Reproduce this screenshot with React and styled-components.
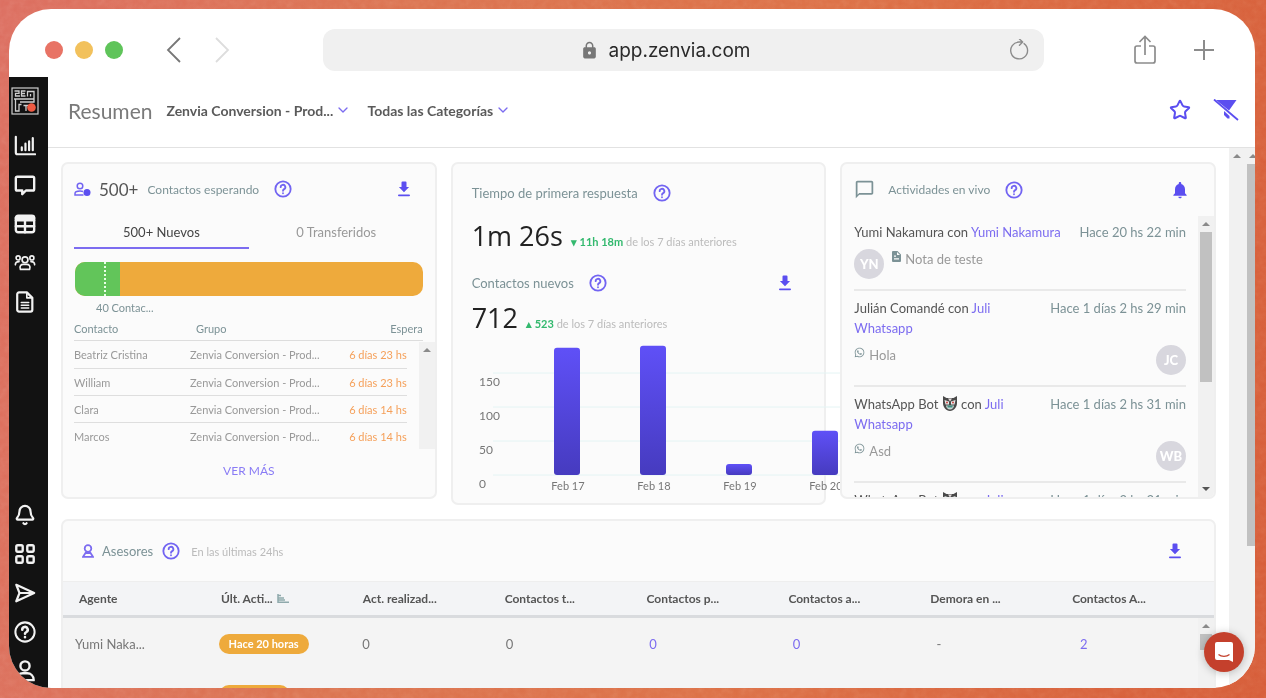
import React, { useState } from 'react';
import styled, { createGlobalStyle } from 'styled-components';
import { MdNotifications, MdChatBubbleOutline, MdLock } from 'react-icons/md';
import { FaWhatsapp } from 'react-icons/fa';
import { Star, Bell, ChevronDown } from 'lucide-react';

const GlobalStyle = createGlobalStyle`
  * {
    box-sizing: border-box;
  }

  body {
    margin: 0;
    font-family: Lato, 'Open Sans', sans-serif;
    font-size: 13px;
    color: #444;
  }

  button, input, select {
    font: inherit;
    color: inherit;
  }

  a {
    color: #7c6cf0;
    text-decoration: none;
  }

  svg {
    display: block;
    flex-shrink: 0;
  }
`;

const Backdrop = styled.div`
  position: relative;
  display: flex;
  height: 100vh;
  padding: 9px 11px 10px 9px;
  background: linear-gradient(100deg, #dc6e60 0%, #db7350 30%, #dc7046 60%, #d65c38 100%);
`;

const Grain = styled.svg`
  position: absolute;
  inset: 0;
  width: 100%;
  height: 100%;
  opacity: 0.4;
  mix-blend-mode: soft-light;
`;

const BrowserWindow = styled.div`
  position: relative;
  flex: 1;
  min-width: 0;
  display: flex;
  flex-direction: column;
  overflow: hidden;
  border-radius: 42px;
  background: #fff;
`;

const Chrome = styled.header`
  display: flex;
  align-items: center;
  flex-shrink: 0;
  height: 68px;
  padding: 14px 40px 0 36px;
  color: #8c8c8c;
`;

const Lights = styled.div`
  display: flex;
  gap: 12px;
`;

const Light = styled.span`
  width: 18px;
  height: 18px;
  border-radius: 50%;
  background: ${({ $color }) => $color};
`;

const ChromeNav = styled.div`
  display: flex;
  gap: 28px;
  margin: 0 91px 0 41px;
`;

const IconButton = styled.button`
  display: flex;
  padding: 0;
  border: none;
  background: none;
  color: ${({ $color }) => $color || '#5b4ef0'};
  cursor: pointer;
`;

const AddressBar = styled.div`
  flex: 1;
  display: flex;
  align-items: center;
  justify-content: center;
  gap: 10px;
  height: 42px;
  padding: 0 14px;
  border-radius: 12px;
  background: #f0f0f0;
`;

const AddressInput = styled.input`
  width: 150px;
  padding: 0;
  border: none;
  outline: none;
  background: none;
  font-family: Inter, 'Open Sans', sans-serif;
  font-size: 19px;
  color: #2a2a2a;
`;

const AddressSide = styled.div`
  flex: 1;
  display: flex;
  justify-content: flex-end;
`;

const ChromeActions = styled.div`
  display: flex;
  align-items: center;
  gap: 36px;
  margin-left: 89px;
`;

const AppBody = styled.div`
  flex: 1;
  min-height: 0;
  display: flex;
`;

const Sidebar = styled.nav`
  display: flex;
  flex-direction: column;
  align-items: center;
  justify-content: space-between;
  flex-shrink: 0;
  width: 39px;
  padding: 10px 7px 6px 0;
  background: #121212;
  color: #f2f2f2;
`;

const SidebarGroup = styled.div`
  display: flex;
  flex-direction: column;
  align-items: center;
  gap: 17px;
`;

const LogoLink = styled.a`
  margin-bottom: 3px;
`;

const Main = styled.main`
  flex: 1;
  min-width: 0;
  display: flex;
  flex-direction: column;
`;

const TopBar = styled.div`
  display: flex;
  align-items: center;
  flex-shrink: 0;
  height: 71px;
  padding: 0 16px 4px 20px;
  border-bottom: 1px solid #e2e2e2;
`;

const PageTitle = styled.h1`
  margin: 0 14px 0 0;
  font-size: 21px;
  font-weight: 400;
  color: #7a7a7a;
`;

const Picker = styled.label`
  display: flex;
  align-items: center;
  margin-right: 16px;
  color: #7c6cf0;

  svg {
    margin-left: -14px;
    pointer-events: none;
  }
`;

const PickerSelect = styled.select`
  appearance: none;
  padding: 0 16px 0 0;
  border: none;
  background: none;
  font-size: 14px;
  font-weight: 700;
  color: #5a5a5a;
`;

const TopActions = styled.div`
  display: flex;
  align-items: center;
  gap: 22px;
  margin-left: auto;
`;

const ScrollRow = styled.div`
  flex: 1;
  min-height: 0;
  display: flex;
`;

const Content = styled.div`
  flex: 1;
  min-width: 0;
  overflow: hidden;
  padding: 14px 13px 0;
`;

const Panels = styled.div`
  display: grid;
  grid-template-columns: repeat(3, minmax(0, 1fr));
  align-items: start;
  gap: 14px;
  margin-bottom: 14px;
`;

const Card = styled.section`
  position: relative;
  border: 2px solid #efefef;
  border-radius: 7px;
  background: #fbfbfb;
`;

const CardHeader = styled.div`
  display: flex;
  align-items: center;
  height: ${({ $height }) => $height || 50}px;
  padding: 0 ${({ $right }) => $right || 24}px 0 ${({ $left }) => $left || 11}px;

  > svg {
    margin-right: ${({ $iconGap }) => $iconGap || 8}px;
  }
`;

const Label = styled.h2`
  margin: 0 ${({ $tight }) => ($tight ? 8 : 14)}px 0 0;
  font-size: ${({ $small }) => ($small ? 12 : 13)}px;
  font-weight: 400;
  color: #7c9296;
`;

const Push = styled.span`
  margin-left: auto;
`;

const Count = styled.span`
  margin-right: 9px;
  font-size: 17px;
  color: #555;
`;

const Tabs = styled.div`
  display: flex;
  margin: 3px 11px 0;
`;

const Tab = styled.button`
  flex: 1;
  height: 32px;
  padding: 0;
  border: none;
  border-bottom: 2px solid ${({ $active }) => ($active ? '#7c6cf0' : 'transparent')};
  background: none;
  color: ${({ $active }) => ($active ? '#444' : '#999')};
  cursor: pointer;
`;

const Meter = styled.div`
  display: flex;
  height: 34px;
  margin: 13px 12px 0;
  overflow: hidden;
  border-radius: 10px;
  background: #eeaa3c;
`;

const MeterFill = styled.div`
  background: #62c55a;
  border-right: ${({ $split }) => ($split ? '2px dotted #e8ffe6' : 'none')};
`;

const MeterCaption = styled.div`
  margin: 4px 0 0 33px;
  font-size: 11px;
  line-height: 16px;
  color: #7c9296;
`;

const QueueWrap = styled.div`
  position: relative;
  padding-left: 11px;
`;

const QueueTable = styled.table`
  display: block;
  font-size: 11px;
  color: #999;

  thead, tbody {
    display: block;
  }

  thead {
    margin-right: 12px;
    border-bottom: 1px solid #ddd;
    color: #7c9296;
  }

  tbody {
    margin-right: 28px;
  }

  tbody tr + tr {
    border-top: 1px solid #dedede;
  }
`;

const QueueRow = styled.tr`
  display: grid;
  grid-template-columns: ${({ $head }) => ($head ? '122px' : '116px')} 1fr auto;
  align-items: center;
  height: ${({ $head }) => ($head ? 24 : 27)}px;

  th, td {
    padding: 0;
    font-weight: 400;
    text-align: left;
  }
`;

const Wait = styled.td`
  color: #f5a05a;
`;

const MoreButton = styled.button`
  display: block;
  margin: 14px auto 18px;
  padding: 0;
  border: none;
  background: none;
  font-size: 12px;
  line-height: 16px;
  color: #8a7cf5;
  cursor: pointer;
`;

const Track = styled.div`
  display: flex;
  flex-direction: column;
  align-items: center;
  flex-shrink: 0;
  width: 16px;
  background: #f1f1f1;
`;

const OverlayTrack = styled(Track)`
  position: absolute;
  right: 0;
  top: ${({ $top }) => $top}px;
  bottom: 0;
`;

const Thumb = styled.div`
  width: 12px;
  height: ${({ $height }) => $height}px;
  background: #c1c1c1;
`;

const Arrow = styled.span`
  width: 0;
  margin: ${({ $down }) => ($down ? 'auto 0 6px' : '6px 0')};
  border: 4px solid transparent;
  border-top-width: ${({ $down }) => ($down ? 4 : 0)}px;
  border-bottom-width: ${({ $down }) => ($down ? 0 : 4)}px;
  border-top-color: #555;
  border-bottom-color: #8a8a8a;
`;

const PageTracks = styled.div`
  display: flex;
  flex-shrink: 0;
  width: 26px;
  overflow: hidden;
`;

const Metric = styled.div`
  display: flex;
  align-items: baseline;
  gap: 8px;
  height: 30px;
  margin-bottom: 12px;
  padding-left: 19px;
  line-height: 30px;
`;

const MetricValue = styled.strong`
  font-family: 'Open Sans', sans-serif;
  font-size: 27px;
  font-weight: 400;
  color: #222;
`;

const Trend = styled.span`
  font-size: 11px;
  color: #bbb;

  b {
    color: #33b96e;
  }
`;

const ChartArea = styled.svg`
  width: 100%;
  height: 158px;
  overflow: visible;

  text {
    font-size: 12px;
    fill: #777;
  }

  text[text-anchor] {
    font-size: 11px;
  }
`;

const FeedCard = styled(Card)`
  height: 337px;
  overflow: hidden;
`;

const FeedList = styled.ul`
  margin: 0;
  padding: 0 28px 0 12px;
  list-style: none;
`;

const FeedItem = styled.li`
  padding: 7px 0 10px;
  border-bottom: 2px solid #e9e9e9;
`;

const FeedTop = styled.div`
  display: flex;
  justify-content: space-between;
  line-height: 20px;
  color: #555;
`;

const FeedNames = styled.div`
  svg {
    display: inline-block;
    vertical-align: -3px;
  }
`;

const FeedTime = styled.time`
  flex-shrink: 0;
  color: #7c9296;
`;

const FeedMessage = styled.div`
  display: flex;
  flex-direction: ${({ $mine }) => ($mine ? 'row' : 'row-reverse')};
  justify-content: ${({ $mine }) => ($mine ? 'flex-start' : 'space-between')};
  gap: 8px;
  margin-top: 7px;
`;

const Avatar = styled.span`
  display: flex;
  align-items: center;
  justify-content: center;
  width: 30px;
  height: 30px;
  border-radius: 50%;
  background: #d8d7de;
  font-weight: 900;
  color: #fff;
`;

const MessageText = styled.span`
  display: flex;
  gap: 4px;
  height: 20px;
  line-height: 20px;
  color: #999;

  svg {
    margin-top: 2px;
    color: #7c9296;
  }
`;

const AgentsCard = styled(Card)`
  overflow: hidden;
`;

const AgentsTable = styled.table`
  display: block;
  background: #f4f4f4;

  thead, tbody {
    display: block;
  }

  thead {
    border-top: 1px solid #eee;
    border-bottom: 3px solid #d9dbde;
    background: #f3f4f6;
  }
`;

const AgentsHeadRow = styled.tr`
  display: grid;
  grid-template-columns: repeat(8, 1fr);
  align-items: center;
  height: 33px;
  padding-left: 16px;

  th {
    display: flex;
    align-items: center;
    gap: 4px;
    padding: 0;
    font-size: 12px;
    color: #555;
  }
`;

const AgentsRow = styled.tr`
  display: grid;
  grid-template-columns: repeat(7, 1fr) 134px;
  align-items: center;
  height: 51px;
  padding-left: 12px;

  td {
    padding: 0;
    color: #777;
  }
`;

const Pill = styled.span`
  display: inline-block;
  padding: 0 10px;
  border-radius: 10px;
  background: #eeaa3c;
  font-size: 11px;
  font-weight: 700;
  line-height: 20px;
  color: #fff;
`;

const Note = styled.span`
  margin-left: 10px;
  font-size: 11px;
  color: #bbb;
`;

const ChatButton = styled.button`
  position: absolute;
  right: 11px;
  bottom: 16px;
  display: flex;
  align-items: center;
  justify-content: center;
  width: 40px;
  height: 40px;
  padding: 0;
  border: none;
  border-radius: 50%;
  background: #c4402c;
  box-shadow: 0 1px 8px rgba(0, 0, 0, 0.25);
  cursor: pointer;
`;

const Icon = ({ size = 22, width = 2, children }) => (
  <svg
    width={size}
    height={size}
    viewBox="0 0 24 24"
    fill="none"
    stroke="currentColor"
    strokeWidth={width}
    strokeLinecap="round"
    strokeLinejoin="round"
  >
    {children}
  </svg>
);

const Download = () => (
  <Push>
    <IconButton aria-label="Descargar">
      <svg width="14" height="18" viewBox="0 0 14 18" fill="#5b4ef0">
        <path d="M5.5 1.5h3a1 1 0 0 1 1 1V7h2.6L7 12.3 1.9 7h2.6V2.5a1 1 0 0 1 1-1z" />
        <rect x="1" y="14.4" width="12" height="1.8" rx="0.9" />
      </svg>
    </IconButton>
  </Push>
);

const Help = () => (
  <IconButton aria-label="Ayuda" $color="#7264f2">
    <Icon size={20} width={2.2}>
      <circle cx="12" cy="12" r="9.2" />
      <path d="M9.2 9.8a2.800 2.800 0 1 1 4.200 2.400c-.9.5-1.400 1-1.400 1.900M12 17v.1" />
    </Icon>
  </IconButton>
);

const Logo = () => (
  <svg width="28" height="28" viewBox="0 0 28 28" fill="none" stroke="#cfcfcf">
    <rect x="1" y="1" width="26" height="26" strokeWidth="1.2" />
    <path d="M3.500 4h4.500v2.300H4.500V9H9M14.500 4h-4v5h4M10.500 6.500h3.500M16.500 9.500V4.500h6.500V12M19.500 7v2.500" strokeWidth="1.3" />
    <path d="M3 12h20M4.500 12v12H8v-6.500h2.500M23 12v3H9M12.500 18.500h5M15 18.500V24" strokeWidth="1.3" />
    <circle cx="20.500" cy="20.500" r="4.300" fill="#ef5b43" stroke="none" />
  </svg>
);

const Mask = () => (
  <svg width="16" height="17" viewBox="0 0 16 17">
    <path d="M1 1l3.500 2h7L15 1v7c0 4-3 8-7 8s-7-4-7-8z" fill="#4a4a4a" />
    <path d="M2.500 5L7 6.500V9.500H3.500zM13.500 5L9 6.500V9.500h3.500z" fill="#e6ecea" />
    <path d="M6 3.500h4l-2 3z" fill="#e3dcdc" />
    <circle cx="5" cy="7.500" r="0.900" fill="#c33" />
    <circle cx="11" cy="7.500" r="0.900" fill="#c33" />
    <path d="M4 10.500h8c0 2.200-1.700 4-4 4s-4-1.800-4-4z" fill="#c9d6d3" />
    <path d="M5.500 10.500h5v2h-5z" fill="#3f8f82" />
  </svg>
);

const NoteIcon = () => (
  <svg width="9" height="11" viewBox="0 0 9 11" fill="currentColor">
    <path fillRule="evenodd" d="M1 0h4.500L9 3.500V10a1 1 0 0 1-1 1H1a1 1 0 0 1-1-1V1a1 1 0 0 1 1-1zM2 4.500v1.200h2V4.500zm0 2.700v1.300h5V7.200zM5 1v3h3z" />
  </svg>
);

const menu = [
  {
    name: 'Resumen',
    icon: <Icon width={2.4}><path d="M2 2v17a2 2 0 0 0 2 2h19" /><path d="M8.500 16.500v-3M12.500 16.500V9.500M16.500 16.500V7M20.500 16.500V3.500" /></Icon>,
  },
  {
    name: 'Mensajes',
    icon: <Icon width={2.6}><path d="M3.500 3h17a1.500 1.500 0 0 1 1.500 1.500v12a1.500 1.500 0 0 1-1.500 1.500H13l-4 4v-4H3.500A1.500 1.500 0 0 1 2 16.500v-12A1.500 1.500 0 0 1 3.500 3z" /></Icon>,
  },
  {
    name: 'Tablero',
    icon: <Icon width={2.6}><rect x="2" y="3" width="20" height="18" rx="2.500" /><path d="M2 5.500h20M2 8h20M2 14.500h20M12 9v12" /></Icon>,
  },
  {
    name: 'Contactos',
    icon: <Icon width={1.8}><circle cx="12" cy="8.500" r="3.200" /><circle cx="4.500" cy="6.500" r="2.200" /><circle cx="19.500" cy="6.500" r="2.200" /><path d="M7 19c-1.500-4 1-5.500 3-5.500h4c2 0 4.500 1.500 3 5.500zM1.500 14c0-2.500 1.500-3.500 4-3.500M22.500 14c0-2.500-1.500-3.500-4-3.500" /></Icon>,
  },
  {
    name: 'Informes',
    icon: <Icon width={2.4}><path d="M5.500 1.500H14l6 6V20.500a2 2 0 0 1-2 2H5.500a2 2 0 0 1-2-2v-17a2 2 0 0 1 2-2z" /><path d="M14 2v5.500h5.500M8 12.500h8M8 15.500h8M8 18.500h8" strokeWidth="1.800" /></Icon>,
  },
];

const footerMenu = [
  { name: 'Notificaciones', icon: <Bell size={22} strokeWidth={2.4} /> },
  {
    name: 'Aplicaciones',
    icon: <Icon width={2.6}><rect x="2.500" y="2.500" width="7" height="7" rx="1.500" /><rect x="14.500" y="2.500" width="7" height="7" rx="1.500" /><rect x="2.500" y="14.500" width="7" height="7" rx="1.500" /><rect x="14.500" y="14.500" width="7" height="7" rx="1.500" /></Icon>,
  },
  {
    name: 'Enviar',
    icon: <Icon width={2.4}><path d="M2.500 3L22 12 2.500 21l3.500-9zM6 12h14" /></Icon>,
  },
  {
    name: 'Ayuda',
    icon: <Icon width={2.2}><circle cx="12" cy="12" r="10.500" /><path d="M9 9.500a3 3 0 1 1 4.500 2.500c-1 .6-1.500 1-1.500 2M12 17.500v.1" strokeWidth="2.800" /></Icon>,
  },
  {
    name: 'Perfil',
    icon: <Icon width={2.6}><circle cx="12" cy="6.500" r="5" /><path d="M2.500 22c0-5 3.500-7.500 7-7.500h5c3.500 0 7 2.500 7 7.500z" /></Icon>,
  },
];

const queue = [
  { name: 'Beatriz Cristina', wait: '6 días 23 hs' },
  { name: 'William', wait: '6 días 23 hs' },
  { name: 'Clara', wait: '6 días 14 hs' },
  { name: 'Marcos', wait: '6 días 14 hs' },
];

const bars = [
  { day: 'Feb 17', value: 187 },
  { day: 'Feb 18', value: 190 },
  { day: 'Feb 19', value: 16 },
  { day: 'Feb 20', value: 65 },
];

const feed = [
  { who: 'Yumi Nakamura', contact: 'Yumi Nakamura', time: 'Hace 20 hs 22 min', text: 'Nota de teste', initials: 'YN', mine: true },
  { who: 'Julián Comandé', contact: 'Juli Whatsapp', time: 'Hace 1 días 2 hs 29 min', text: 'Hola', initials: 'JC' },
  { who: 'WhatsApp Bot', bot: true, contact: 'Juli Whatsapp', time: 'Hace 1 días 2 hs 31 min', text: 'Asd', initials: 'WB' },
  { who: 'WhatsApp Bot', bot: true, contact: 'Juli Whatsapp', time: 'Hace 1 días 2 hs 31 min', text: 'Asd', initials: 'WB' },
];

const agentColumns = [
  'Agente',
  'Últ. Acti...',
  'Act. realizad...',
  'Contactos t...',
  'Contactos p...',
  'Contactos a...',
  'Demora en ...',
  'Contactos A...',
];

const agents = [
  { name: 'Yumi Naka...', last: 'Hace 20 horas', done: 0, total: 0, pending: 0, open: 0, delay: '-', assigned: 2 },
  { name: 'Bruna Ser...', last: 'Hace 1 día', done: 0, total: 0, pending: 0, open: 0, delay: '-', assigned: 1 },
];

const WaitingCard = () => {
  const [tab, setTab] = useState('new');

  return (
    <Card>
      <CardHeader>
        <svg width="17" height="15" viewBox="0 0 17 15" fill="none" stroke="#7264f2" strokeWidth="1.500">
          <circle cx="6" cy="4" r="2.800" />
          <path d="M9.500 13H1v-1.500C1 9.500 3.500 9 6 9c1.200 0 2.200.2 3 .5" />
          <circle cx="13" cy="10.500" r="3.500" fill="#5b4ef0" stroke="none" />
        </svg>
        <Count>500+</Count>
        <Label $small>Contactos esperando</Label>
        <Help />
        <Download />
      </CardHeader>
      <Tabs role="tablist">
        <Tab role="tab" aria-selected={tab === 'new'} $active={tab === 'new'} onClick={() => setTab('new')}>
          500+ Nuevos
        </Tab>
        <Tab role="tab" aria-selected={tab === 'moved'} $active={tab === 'moved'} onClick={() => setTab('moved')}>
          0 Transferidos
        </Tab>
      </Tabs>
      <Meter>
        <MeterFill $split style={{ width: '9%' }} />
        <MeterFill style={{ width: '4%' }} />
      </Meter>
      <MeterCaption>40 Contac...</MeterCaption>
      <QueueWrap>
        <QueueTable>
          <thead>
            <QueueRow $head>
              <th>Contacto</th>
              <th>Grupo</th>
              <th>Espera</th>
            </QueueRow>
          </thead>
          <tbody>
            {queue.map((row) => (
              <QueueRow key={row.name}>
                <td>{row.name}</td>
                <td>Zenvia Conversion - Prod...</td>
                <Wait>{row.wait}</Wait>
              </QueueRow>
            ))}
          </tbody>
        </QueueTable>
        <OverlayTrack $top={26}>
          <Arrow />
        </OverlayTrack>
      </QueueWrap>
      <MoreButton>VER MÁS</MoreButton>
    </Card>
  );
};

const Chart = () => {
  const zero = 130;
  const scale = 34 / 50;

  return (
    <ChartArea role="img" aria-label="Contactos nuevos por día">
      <defs>
        <linearGradient id="bar" x1="0" y1="0" x2="0" y2="1">
          <stop offset="0" stopColor="#5f50f7" />
          <stop offset="1" stopColor="#463bbf" />
        </linearGradient>
      </defs>
      {[0, 50, 100, 150].map((tick) => (
        <g key={tick}>
          <line x1="40" x2="400" y1={zero - tick * scale} y2={zero - tick * scale} stroke="#e4f4f4" />
          <text x="26" y={zero - tick * scale + 13}>{tick}</text>
        </g>
      ))}
      {bars.map((bar, i) => (
        <g key={bar.day}>
          <rect x={101 + i * 86} y={zero - bar.value * scale} width="26" height={bar.value * scale} rx="3" fill="url(#bar)" />
          <text x={115 + i * 86} y={zero + 15} textAnchor="middle">{bar.day}</text>
        </g>
      ))}
    </ChartArea>
  );
};

const ResponseCard = () => (
  <Card>
    <CardHeader $height={57} $left={19}>
      <Label>Tiempo de primera respuesta</Label>
      <Help />
    </CardHeader>
    <Metric>
      <MetricValue>1m 26s</MetricValue>
      <Trend><b>▾ 11h 18m</b> de los 7 días anteriores</Trend>
    </Metric>
    <CardHeader $height={40} $left={19} $right={32}>
      <Label>Contactos nuevos</Label>
      <Help />
      <Download />
    </CardHeader>
    <Metric>
      <MetricValue>712</MetricValue>
      <Trend><b>▴ 523</b> de los 7 días anteriores</Trend>
    </Metric>
    <Chart />
  </Card>
);

const ActivityCard = () => (
  <FeedCard>
    <CardHeader $height={51} $left={12} $iconGap={13}>
      <MdChatBubbleOutline size={21} color="#7c9296" />
      <Label $small>Actividades en vivo</Label>
      <Help />
      <Push>
        <IconButton aria-label="Notificaciones">
          <MdNotifications size={20} />
        </IconButton>
      </Push>
    </CardHeader>
    <FeedList>
      {feed.map((item, i) => (
        <FeedItem key={i}>
          <FeedTop>
            <FeedNames>
              {item.who} {item.bot && <Mask />} con <a href="#contacto">{item.contact}</a>
            </FeedNames>
            <FeedTime>{item.time}</FeedTime>
          </FeedTop>
          <FeedMessage $mine={item.mine}>
            <Avatar>{item.initials}</Avatar>
            <MessageText>
              {item.mine ? <NoteIcon /> : <FaWhatsapp size={11} />}
              {item.text}
            </MessageText>
          </FeedMessage>
        </FeedItem>
      ))}
    </FeedList>
    <OverlayTrack $top={52}>
      <Arrow />
      <Thumb $height={150} />
      <Arrow $down />
    </OverlayTrack>
  </FeedCard>
);

const AgentsPanel = () => (
  <AgentsCard>
    <CardHeader $height={60} $left={19} $right={32}>
      <svg width="12" height="14" viewBox="0 0 12 14" fill="none" stroke="#7c6cf0" strokeWidth="1.800">
        <circle cx="6" cy="4.500" r="3.300" />
        <path d="M3.500 9L1 12.800h10L8.500 9z" />
      </svg>
      <Label $tight>Asesores</Label>
      <Help />
      <Note>En las últimas 24hs</Note>
      <Download />
    </CardHeader>
    <AgentsTable>
      <thead>
        <AgentsHeadRow>
          {agentColumns.map((name, i) => (
            <th key={name}>
              {name}
              {i === 1 && (
                <svg width="12" height="9" viewBox="0 0 12 9" stroke="#8fa9ac" strokeWidth="1.500">
                  <path d="M1 0v9M1 1.500h3M1 4h6M1 6h7M1 8.200h11" />
                </svg>
              )}
            </th>
          ))}
        </AgentsHeadRow>
      </thead>
      <tbody>
        {agents.map((agent) => (
          <AgentsRow key={agent.name}>
            <td>{agent.name}</td>
            <td><Pill>{agent.last}</Pill></td>
            <td>{agent.done}</td>
            <td>{agent.total}</td>
            <td><a href="#pendientes">{agent.pending}</a></td>
            <td><a href="#abiertos">{agent.open}</a></td>
            <td>{agent.delay}</td>
            <td><a href="#asignados">{agent.assigned}</a></td>
          </AgentsRow>
        ))}
      </tbody>
    </AgentsTable>
    <OverlayTrack $top={97}>
      <Arrow />
      <Thumb $height={16} />
    </OverlayTrack>
  </AgentsCard>
);

const App = () => (
  <>
    <GlobalStyle />
    <Backdrop>
      <Grain aria-hidden="true">
        <filter id="grain">
          <feTurbulence type="fractalNoise" baseFrequency="0.15" numOctaves="3" />
          <feColorMatrix type="saturate" values="0" />
        </filter>
        <rect width="100%" height="100%" filter="url(#grain)" />
      </Grain>
      <BrowserWindow>
        <Chrome>
          <Lights>
            <Light $color="#e87365" />
            <Light $color="#f2c15c" />
            <Light $color="#5fc45a" />
          </Lights>
          <ChromeNav>
            <IconButton aria-label="Atrás" $color="#777">
              <svg width="20" height="26" viewBox="0 0 20 26" fill="none" stroke="currentColor" strokeWidth="1.800"><path d="M16 1L4 13l12 12" /></svg>
            </IconButton>
            <IconButton aria-label="Adelante" $color="#ddd">
              <svg width="20" height="26" viewBox="0 0 20 26" fill="none" stroke="currentColor" strokeWidth="1.800"><path d="M4 1l12 12L4 25" /></svg>
            </IconButton>
          </ChromeNav>
          <AddressBar>
            <AddressSide><MdLock size={19} color="#777" /></AddressSide>
            <AddressInput aria-label="Dirección" defaultValue="app.zenvia.com" />
            <AddressSide>
              <IconButton aria-label="Recargar" $color="#8c8c8c">
                <Icon size={22} width={1.5}><path d="M17.500 5A9.200 9.200 0 1 1 12 3.300h3.500M12.500 0l3.500 3.300-3.500 3.500" /></Icon>
              </IconButton>
            </AddressSide>
          </AddressBar>
          <ChromeActions>
            <IconButton aria-label="Compartir" $color="#8c8c8c">
              <svg width="24" height="30" viewBox="0 0 24 30" fill="none" stroke="currentColor" strokeWidth="1.700"><path d="M8 11H4a2 2 0 0 0-2 2v13a2 2 0 0 0 2 2h16a2 2 0 0 0 2-2V13a2 2 0 0 0-2-2h-4M12 20V2M6.500 7L12 1.500 17.500 7" /></svg>
            </IconButton>
            <IconButton aria-label="Nueva pestaña" $color="#8c8c8c">
              <svg width="22" height="22" viewBox="0 0 22 22" stroke="currentColor" strokeWidth="2"><path d="M11 1v20M1 11h20" /></svg>
            </IconButton>
          </ChromeActions>
        </Chrome>
        <AppBody>
          <Sidebar>
            <SidebarGroup>
              <LogoLink href="#inicio" aria-label="Inicio"><Logo /></LogoLink>
              {menu.map((item) => (
                <IconButton key={item.name} aria-label={item.name} $color="#f2f2f2">{item.icon}</IconButton>
              ))}
            </SidebarGroup>
            <SidebarGroup>
              {footerMenu.map((item) => (
                <IconButton key={item.name} aria-label={item.name} $color="#f2f2f2">{item.icon}</IconButton>
              ))}
            </SidebarGroup>
          </Sidebar>
          <Main>
            <TopBar>
              <PageTitle>Resumen</PageTitle>
              <Picker>
                <PickerSelect aria-label="Grupo">
                  <option>Zenvia Conversion - Prod...</option>
                </PickerSelect>
                <ChevronDown size={16} />
              </Picker>
              <Picker>
                <PickerSelect aria-label="Categoría">
                  <option>Todas las Categorías</option>
                </PickerSelect>
                <ChevronDown size={16} />
              </Picker>
              <TopActions>
                <IconButton aria-label="Favorito"><Star size={22} strokeWidth={2.2} /></IconButton>
                <IconButton aria-label="Quitar filtros">
                  <svg width="26" height="22" viewBox="0 0 26 22" fill="currentColor">
                    <path d="M3 1h20.500L16 11.500z" />
                    <path d="M11 12l5.500 5v2.500h-2L11 16z" />
                    <path d="M1 0.500L25 21" stroke="currentColor" strokeWidth="1.800" />
                  </svg>
                </IconButton>
              </TopActions>
            </TopBar>
            <ScrollRow>
              <Content>
                <Panels>
                  <WaitingCard />
                  <ResponseCard />
                  <ActivityCard />
                </Panels>
                <AgentsPanel />
              </Content>
              <PageTracks>
                <Track><Arrow /></Track>
                <Track>
                  <Arrow />
                  <Thumb $height={382} />
                </Track>
              </PageTracks>
            </ScrollRow>
          </Main>
        </AppBody>
        <ChatButton aria-label="Abrir chat">
          <svg width="20" height="22" viewBox="0 0 20 22" fill="#fff">
            <path d="M3 1h14a2 2 0 0 1 2 2v18l-4-2H3a2 2 0 0 1-2-2V3a2 2 0 0 1 2-2z" />
            <path d="M4.500 13.500c3 2.500 8 2.500 11 0" fill="none" stroke="#c4402c" strokeWidth="1.300" />
          </svg>
        </ChatButton>
      </BrowserWindow>
    </Backdrop>
  </>
);

export default App;
